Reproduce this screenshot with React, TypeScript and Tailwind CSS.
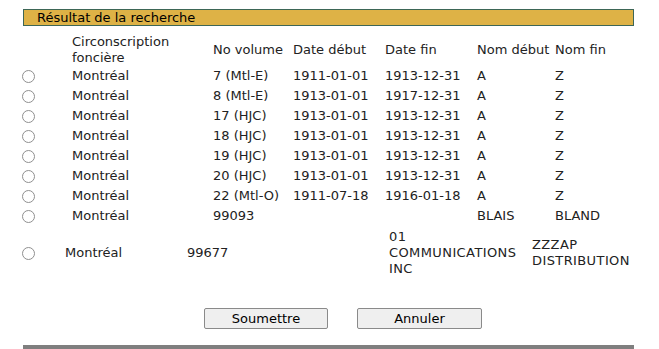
import { Fragment } from "react";

export default function App() {
  const rows = [
    ["7 (Mtl-E)", "1911-01-01", "1913-12-31", "A", "Z"],
    ["8 (Mtl-E)", "1913-01-01", "1917-12-31", "A", "Z"],
    ["17 (HJC)", "1913-01-01", "1913-12-31", "A", "Z"],
    ["18 (HJC)", "1913-01-01", "1913-12-31", "A", "Z"],
    ["19 (HJC)", "1913-01-01", "1913-12-31", "A", "Z"],
    ["20 (HJC)", "1913-01-01", "1913-12-31", "A", "Z"],
    ["22 (Mtl-O)", "1911-07-18", "1916-01-18", "A", "Z"],
    ["99093", "", "", "BLAIS", "BLAND"],
  ];

  const radio = (
    <span className="block w-[13px] h-[13px] rounded-full border border-[#8f8f8f] bg-white" />
  );

  return (
    <div className="w-[659px] h-[349px] overflow-hidden bg-white text-[13px] leading-[16px] text-[#222] font-['DejaVu_Sans',Verdana,sans-serif]">
      {/* Title bar */}
      <div className="ml-[23px] mt-[9px] w-[611px] h-[17px] border border-[#3d6656] bg-[#deb246] pl-[13px] leading-[15px] text-black">
        Résultat de la recherche
      </div>

      {/* Results */}
      <div className="ml-[22px] mt-[8px] grid grid-cols-[50px_141px_80px_92px_92px_78px_79px] grid-rows-[32px_repeat(8,20px)] items-center">
        <div />
        <div>
          Circonscription
          <br />
          foncière
        </div>
        <div>No volume</div>
        <div>Date début</div>
        <div>Date fin</div>
        <div className="whitespace-nowrap">Nom début</div>
        <div>Nom fin</div>

        {rows.map((r, i) => (
          <Fragment key={i}>
            <div className="flex items-center">{radio}</div>
            <div>Montréal</div>
            {r.map((v, j) => (
              <div key={j}>{v}</div>
            ))}
          </Fragment>
        ))}
      </div>

      {/* Last row */}
      <div className="ml-[22px] mt-[3px] h-[48px] flex items-center">
        <div className="w-[43px]">{radio}</div>
        <div className="w-[122px]">Montréal</div>
        <div className="w-[202px]">99677</div>
        <div className="w-[143px] tracking-[0.4px]">
          01
          <br />
          COMMUNICATIONS
          <br />
          INC
        </div>
        <div className="w-[102px] tracking-[0.4px]">
          ZZZAP
          <br />
          DISTRIBUTION
        </div>
      </div>

      {/* Buttons */}
      <div className="mt-[31px] ml-[204px] flex gap-[29px]">
        <button className="w-[124px] h-[21px] rounded-[2px] border border-[#8a8a8a] bg-[#efefef] text-[13px] text-black">
          Soumettre
        </button>
        <button className="w-[125px] h-[21px] rounded-[2px] border border-[#8a8a8a] bg-[#efefef] text-[13px] text-black">
          Annuler
        </button>
      </div>

      <div className="ml-[23px] mt-[16px] w-[611px] h-[4px] bg-[#7f7f7f]" />
    </div>
  );
}
